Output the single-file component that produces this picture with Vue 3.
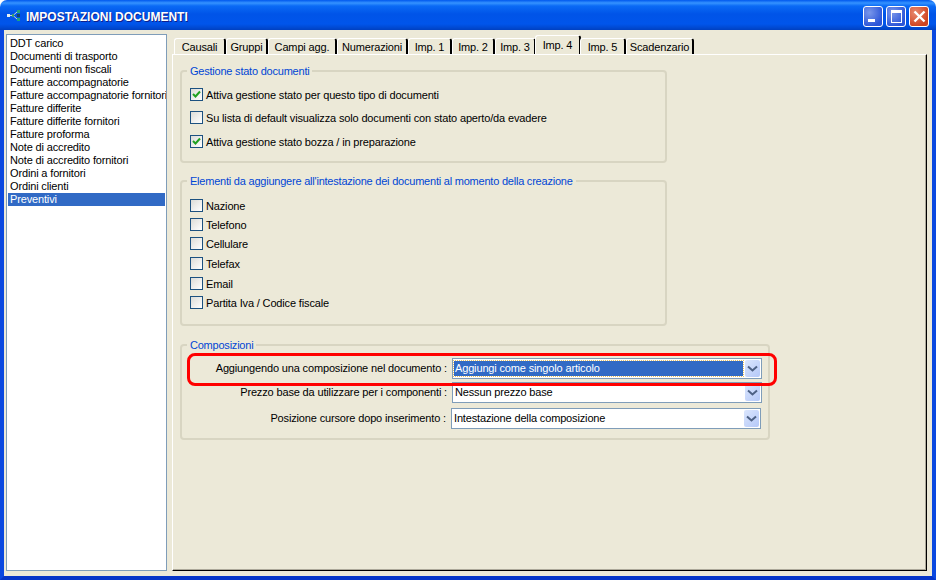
<script setup>
const docs = ['DDT carico','Documenti di trasporto','Documenti non fiscali','Fatture accompagnatorie','Fatture accompagnatorie fornitori','Fatture differite','Fatture differite fornitori','Fatture proforma','Note di accredito','Note di accredito fornitori','Ordini a fornitori','Ordini clienti','Preventivi']
const tabs = [
  { t: 'Causali', w: 52 }, { t: 'Gruppi', w: 42 }, { t: 'Campi agg.', w: 69 }, { t: 'Numerazioni', w: 71 },
  { t: 'Imp. 1', w: 44 }, { t: 'Imp. 2', w: 43 }, { t: 'Imp. 3', w: 41 }, { t: 'Imp. 4', w: 46, active: true },
  { t: 'Imp. 5', w: 46 }, { t: 'Scadenzario', w: 68 }
]
const stato = [
  { t: 'Attiva gestione stato per questo tipo di documenti', on: true, h: 23 },
  { t: 'Su lista di default visualizza solo documenti con stato aperto/da evadere', on: false, h: 24 },
  { t: 'Attiva gestione stato bozza / in preparazione', on: true, h: 13 }
]
const elementi = [
  { t: 'Nazione', h: 19 }, { t: 'Telefono', h: 19 }, { t: 'Cellulare', h: 20 },
  { t: 'Telefax', h: 20 }, { t: 'Email', h: 19 }, { t: 'Partita Iva / Codice fiscale', h: 13 }
]
const combos = [
  { l: 'Aggiungendo una composizione nel documento :', v: 'Aggiungi come singolo articolo', sel: true, h: 24, x: 0 },
  { l: 'Prezzo base da utilizzare per i componenti :', v: 'Nessun prezzo base', h: 26, x: 0 },
  { l: 'Posizione cursore dopo inserimento :', v: 'Intestazione della composizione', h: 22, x: -1 }
]
</script>

<template>
  <div class="window">
    <header class="titlebar">
      <svg class="appicon" width="14" height="14" viewBox="0 0 14 14">
        <path d="M2 6.500H6M6 6.500L10 3M6 6.500L10 10" stroke="#c8d8d0" stroke-width="1" fill="none" />
        <rect x="0" y="5" width="3" height="3" fill="#e8f0f0" />
        <rect x="5" y="5" width="2" height="3" fill="#38a070" />
        <rect x="10" y="1" width="3" height="3" fill="#20a080" />
        <rect x="10" y="5" width="3" height="3" fill="#104868" />
        <rect x="10" y="9" width="3" height="3" fill="#20a080" />
      </svg>
      <span class="title">IMPOSTAZIONI DOCUMENTI</span>
      <div class="winbtns">
        <button class="wb"><i class="min"></i></button>
        <button class="wb"><i class="max"></i></button>
        <button class="wb close">
          <svg width="13" height="13" viewBox="0 0 13 13"><path d="M1.500 1.500L11.500 11.500M11.500 1.500L1.500 11.500" stroke="#fff" stroke-width="2.400" /></svg>
        </button>
      </div>
    </header>
    <div class="body">
      <ul class="list">
        <li v-for="d in docs" :key="d" :class="{ sel: d === 'Preventivi' }">{{ d }}</li>
      </ul>
      <div class="tabarea">
        <div class="tabs">
          <div v-for="tab in tabs" :key="tab.t" class="tab" :class="{ active: tab.active }" :style="{ width: tab.w + 'px' }">{{ tab.t }}</div>
        </div>
        <div class="panel">
          <fieldset class="group g1">
            <legend>Gestione stato documenti</legend>
            <div v-for="c in stato" :key="c.t" class="check" :style="{ height: c.h + 'px' }">
              <span class="box">
                <svg v-if="c.on" width="11" height="11" viewBox="0 0 11 11"><path d="M2 5L4.500 7.500L9 2.500" fill="none" stroke="#21a121" stroke-width="2" /></svg>
              </span>
              <span>{{ c.t }}</span>
            </div>
          </fieldset>
          <fieldset class="group g2">
            <legend>Elementi da aggiungere all'intestazione dei documenti al momento della creazione</legend>
            <div v-for="c in elementi" :key="c.t" class="check" :style="{ height: c.h + 'px' }">
              <span class="box"></span>
              <span>{{ c.t }}</span>
            </div>
          </fieldset>
          <fieldset class="group g3">
            <legend>Composizioni</legend>
            <div v-for="c in combos" :key="c.l" class="row" :style="{ height: c.h + 'px', marginLeft: c.x + 'px' }">
              <span class="lbl">{{ c.l }}</span>
              <div class="combo">
                <span class="val" :class="{ focus: c.sel }">{{ c.v }}</span>
                <span class="drop">
                  <svg width="11" height="8" viewBox="0 0 11 8"><path d="M1 1.500L5.500 5.500L10 1.500" fill="none" stroke="#4d6185" stroke-width="2" /></svg>
                </span>
              </div>
            </div>
            <div class="redmark"></div>
          </fieldset>
        </div>
      </div>
    </div>
  </div>
</template>

<style>
html, body { margin: 0; background: #fff; }
</style>

<style scoped>
.window {
  width: 936px;
  height: 580px;
  display: flex;
  flex-direction: column;
  font-family: "Liberation Sans", Arial, sans-serif;
  font-size: 11px;
  letter-spacing: -0.15px;
  color: #000;
  border-radius: 7px 7px 0 0;
  overflow: hidden;
}
.titlebar {
  height: 30px;
  flex: none;
  display: flex;
  align-items: center;
  box-sizing: border-box;
  padding: 0 7px;
  background: linear-gradient(180deg, #0058ee 0, #3593ff 3px, #0a6af5 6px, #0054e8 14px, #0055eb 24px, #0048d0 28px, #0040c0 30px);
}
.appicon { flex: none; margin-top: 1px; }
.title {
  margin-left: 5px;
  margin-top: 3px;
  color: #fff;
  font-weight: bold;
  font-size: 12px;
  letter-spacing: 0;
  text-shadow: 1px 1px 0 #0f1f8a;
}
.winbtns { margin-left: auto; display: flex; gap: 3px; margin-top: 3px; }
.wb {
  width: 20px;
  height: 21px;
  padding: 0;
  box-sizing: border-box;
  border: 1px solid #fff;
  border-radius: 3px;
  background: radial-gradient(circle at 30% 30%, #7a97ea, #2b55d8 75%);
  position: relative;
  display: flex;
  align-items: center;
  justify-content: center;
}
.wb .min { position: absolute; left: 4px; bottom: 4px; width: 7px; height: 3px; background: #fff; }
.wb .max { width: 9px; height: 9px; border: 1px solid #fff; border-top-width: 3px; box-sizing: content-box; }
.wb.close { background: radial-gradient(circle at 30% 30%, #e88a70, #cf4320 75%); }
.body {
  flex: 1;
  display: flex;
  min-height: 0;
  box-sizing: border-box;
  background: #ece9d8;
  border-left: 4px solid #0a48e0;
  border-right: 4px solid #0a48e0;
  border-bottom: 4px solid #0535c8;
  padding: 4px 0 5px 2px;
  gap: 5px;
}
.list {
  list-style: none;
  margin: 0;
  padding: 2px 1px;
  width: 161px;
  box-sizing: border-box;
  background: #fff;
  border: 1px solid #7f9db9;
  overflow: hidden;
}
.list li {
  height: 13px;
  line-height: 13px;
  padding-left: 2px;
  white-space: nowrap;
}
.list li.sel { background: #316ac5; color: #fff; }
.tabarea { display: flex; flex-direction: column; width: 755px; padding-top: 3px; box-sizing: border-box; }
.tabs { display: flex; height: 17px; padding-left: 2px; position: relative; z-index: 1; }
.tab {
  height: 16px;
  margin-top: 1px;
  box-sizing: border-box;
  border-top: 1px solid #fff;
  border-left: 1px solid #fff;
  border-right: 2px solid #000;
  border-radius: 3px 3px 0 0;
  text-align: center;
  line-height: 17px;
  white-space: nowrap;
}
.tab.active { height: 19px; margin-top: -2px; margin-left: -1px; margin-right: -1px; background: #ece9d8; line-height: 18px; }
.panel {
  flex: 1;
  box-sizing: border-box;
  border: 1px solid;
  border-color: #fff #000 #000 #fff;
  box-shadow: inset -1px -1px 0 #aca899;
  padding: 9px 0 0 7px;
}
.group {
  margin: 0;
  padding: 0;
  box-sizing: border-box;
  border: 2px solid #d8d5c2;
  border-radius: 4px;
  position: relative;
  min-width: 0;
}
.group legend {
  margin-left: 5px;
  padding: 0 3px;
  color: #0046d5;
  line-height: 13px;
  letter-spacing: -0.22px;
  position: relative;
  top: 1px;
}
.g1 { width: 487px; height: 99px; padding: 11px 0 0 0; }
.g2 { width: 487px; height: 152px; margin-top: 11px; padding: 12px 0 0 0; }
.g3 { width: 590px; height: 102px; margin-top: 12px; padding: 7px 0 0 0; }
.check { display: flex; align-items: flex-start; gap: 3px; margin-left: 8px; white-space: nowrap; line-height: 15px; }
.box {
  width: 13px;
  height: 13px;
  flex: none;
  box-sizing: border-box;
  border: 1px solid #1c5180;
  background: linear-gradient(135deg, #dcdcd7, #fff);
  display: flex;
  align-items: center;
  justify-content: center;
}
.row { display: flex; align-items: flex-start; }
.lbl { width: 265px; text-align: right; flex: none; line-height: 21px; white-space: nowrap; }
.combo {
  width: 310px;
  height: 21px;
  margin-left: 5px;
  flex: none;
  box-sizing: border-box;
  border: 1px solid #7f9db9;
  background: #fff;
  display: flex;
  align-items: center;
  padding: 1px;
}
.val { flex: 1; line-height: 15px; height: 15px; padding-left: 1px; margin-right: 2px; white-space: nowrap; }
.val.focus { background: #316ac5; color: #fff; outline: 1px dotted #e8c060; outline-offset: 0; }
.drop {
  width: 15px;
  height: 17px;
  flex: none;
  border-radius: 2px;
  background: linear-gradient(135deg, #dbe6fd, #b4c8f8);
  display: flex;
  align-items: center;
  justify-content: center;
}
.redmark {
  position: absolute;
  left: 5px;
  top: 2px;
  width: 590px;
  height: 33px;
  box-sizing: border-box;
  border: 3px solid #f00;
  border-radius: 8px;
  pointer-events: none;
}
</style>
